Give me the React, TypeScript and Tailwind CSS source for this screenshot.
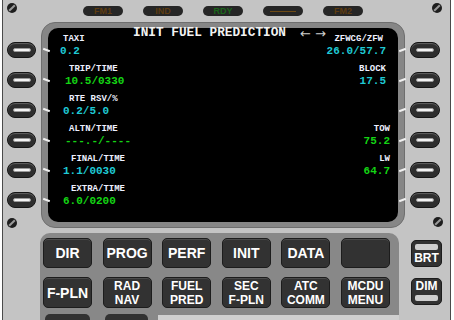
import React from "react";

const mono = { fontFamily: '"Liberation Mono", "DejaVu Sans Mono", monospace' };
const sans = { fontFamily: '"Liberation Sans", Arial, sans-serif' };

function Screw() {
  return (
    <div className="w-[10px] h-[10px] rounded-full bg-[#1e1e1e] flex items-center justify-center">
      <div className="w-[8px] h-[2px] bg-[#9a9a9a] -rotate-45" />
    </div>
  );
}

function Lsk() {
  return (
    <div className="h-[16px] w-full shrink-0 rounded-full bg-[#2e2e2e] border border-[#151515] flex items-center justify-center shadow-[inset_0_1px_1px_rgba(255,255,255,0.25)]">
      <div className="w-[18px] h-[4px] rounded-[2px] bg-[#f4f4f4] border border-[#9a9a9a]" />
    </div>
  );
}

function Annun({ text, color }: { text: string; color: string }) {
  return (
    <div className="w-[40px] h-[10px] rounded-full bg-[#262626] flex items-center justify-center">
      {text ? (
        <span className="text-[9px] leading-none font-bold" style={{ ...sans, color }}>
          {text}
        </span>
      ) : (
        <div className="w-[26px] h-[1px]" style={{ background: color }} />
      )}
    </div>
  );
}

function Key({ lines, h }: { lines: string[]; h: string }) {
  const single = lines.length === 1;
  return (
    <div
      className={`w-[49px] ${h} shrink-0 rounded-[5px] bg-[#323232] border border-[#1c1c1c] flex flex-col items-center justify-center text-white font-bold shadow-[inset_0_1px_0_rgba(255,255,255,0.12)] ${
        single ? "text-[14px] leading-[14px]" : "text-[12px] leading-[14px]"
      }`}
      style={sans}
    >
      {lines.map((l, i) => (
        <span key={i}>{l}</span>
      ))}
    </div>
  );
}

type Row = {
  ll: string;
  lv: string;
  lc: string;
  lpl: string;
  vpl: string;
  rl?: string;
  rv?: string;
  rc?: string;
  rlpr?: string;
  rvpr?: string;
};

const CYAN = "text-[#1fc9d4]";
const GREEN = "text-[#14d414]";

const rows: Row[] = [
  { ll: "TAXI", lv: "0.2", lc: CYAN, lpl: "pl-[15px]", vpl: "pl-[12px]", rl: "ZFWCG/ZFW", rv: "26.0/57.7", rc: CYAN, rlpr: "pr-[15px]", rvpr: "pr-[12px]" },
  { ll: "TRIP/TIME", lv: "10.5/0330", lc: GREEN, lpl: "pl-[21px]", vpl: "pl-[17px]", rl: "BLOCK", rv: "17.5", rc: CYAN, rlpr: "pr-[12px]", rvpr: "pr-[12px]" },
  { ll: "RTE RSV/%", lv: "0.2/5.0", lc: CYAN, lpl: "pl-[21px]", vpl: "pl-[15px]" },
  { ll: "ALTN/TIME", lv: "---.-/----", lc: GREEN, lpl: "pl-[21px]", vpl: "pl-[17px]", rl: "TOW", rv: "75.2", rc: GREEN, rlpr: "pr-[8px]", rvpr: "pr-[8px]" },
  { ll: "FINAL/TIME", lv: "1.1/0030", lc: CYAN, lpl: "pl-[23px]", vpl: "pl-[15px]", rl: "LW", rv: "64.7", rc: GREEN, rlpr: "pr-[8px]", rvpr: "pr-[8px]" },
  { ll: "EXTRA/TIME", lv: "6.0/0200", lc: GREEN, lpl: "pl-[23px]", vpl: "pl-[15px]" },
];

export default function App() {
  const lsks = [0, 1, 2, 3, 4, 5];
  return (
    <div className="w-[454px] h-[320px] bg-white overflow-hidden flex">
      <div className="ml-[2px] w-[449px] h-[320px] shrink-0 bg-[#c4c4c4] border-x border-[#4a4a4a] relative flex flex-col overflow-hidden">
        {/* screws */}
        <div className="absolute left-[4px] top-[3px]"><Screw /></div>
        <div className="absolute left-[429px] top-[3px]"><Screw /></div>
        <div className="absolute left-[4px] top-[218px]"><Screw /></div>
        <div className="absolute left-[430px] top-[217px]"><Screw /></div>

        {/* annunciators */}
        <div className="h-[22px] shrink-0 flex pt-[6px] pl-[80px] gap-[20px]">
          <Annun text="FM1" color="#5e3c10" />
          <Annun text="IND" color="#5e3c10" />
          <Annun text="RDY" color="#1b661b" />
          <Annun text="" color="#6e4a14" />
          <Annun text="FM2" color="#5e3c10" />
        </div>

        {/* middle */}
        <div className="h-[206px] shrink-0 flex">
          <div className="ml-[4px] w-[29px] flex flex-col pt-[20px] gap-[14px]">
            {lsks.map((i) => (
              <Lsk key={i} />
            ))}
          </div>
          <div className="ml-[5px] w-[364px] h-full rounded-[14px] bg-[#868686] border border-[#6e6e6e] pt-[5px] pl-[6px] relative">
            <div className="absolute left-[1px] top-[26px] flex flex-col gap-[28px]">
              {lsks.map((i) => (
                <div key={i} className="w-[7px] h-[2px] bg-[#f0f0f0] rotate-[20deg]" />
              ))}
            </div>
            <div className="absolute left-[357px] top-[26px] flex flex-col gap-[28px]">
              {lsks.map((i) => (
                <div key={i} className="w-[7px] h-[2px] bg-[#f0f0f0] -rotate-[20deg]" />
              ))}
            </div>
            <div className="w-[350px] h-[194px] bg-black rounded-[10px] flex flex-col" style={mono}>
              <div className="h-[11px] shrink-0 -mb-[6px] flex items-center pl-[85px] font-bold text-[12.75px] leading-none text-[#f2f2f2] whitespace-pre">
                <span>INIT FUEL PREDICTION</span>
                <span className="ml-[14px] text-[13px] font-normal text-[#cfcfcf] whitespace-pre" style={{ fontFamily: '"DejaVu Sans", sans-serif' }}>
                  {"← →"}
                </span>
              </div>
              {rows.map((r, i) => (
                <div key={i} className="h-[30px] shrink-0 flex justify-between">
                  <div className="flex flex-col">
                    <div className={`h-[12px] flex items-center ${r.lpl} text-[9px] font-bold leading-none text-[#eef0ff] whitespace-pre`}>
                      {r.ll}
                    </div>
                    <div className={`h-[13px] flex items-center ${r.vpl} text-[11px] font-bold leading-none ${r.lc} whitespace-pre`}>
                      {r.lv}
                    </div>
                  </div>
                  {r.rl ? (
                    <div className="flex flex-col items-end">
                      <div className={`h-[12px] flex items-center ${r.rlpr} text-[9px] font-bold leading-none text-[#eef0ff] whitespace-pre`}>
                        {r.rl}
                      </div>
                      <div className={`h-[13px] flex items-center ${r.rvpr} text-[11px] font-bold leading-none ${r.rc} whitespace-pre`}>
                        {r.rv}
                      </div>
                    </div>
                  ) : null}
                </div>
              ))}
            </div>
          </div>
          <div className="ml-[5px] w-[30px] flex flex-col pt-[20px] gap-[14px]">
            {lsks.map((i) => (
              <Lsk key={i} />
            ))}
          </div>
        </div>

        {/* keypad */}
        <div className="flex shrink-0 mt-[5px]">
          <div className="ml-[37px] w-[359px] h-[100px] shrink-0 rounded-[10px] bg-[#888888] pl-[3px] pt-[5px] flex flex-col gap-[10px]">
            <div className="flex gap-[10.6px] shrink-0">
              <Key lines={["DIR"]} h="h-[30px]" />
              <Key lines={["PROG"]} h="h-[30px]" />
              <Key lines={["PERF"]} h="h-[30px]" />
              <Key lines={["INIT"]} h="h-[30px]" />
              <Key lines={["DATA"]} h="h-[30px]" />
              <Key lines={[""]} h="h-[30px]" />
            </div>
            <div className="flex gap-[10.6px] -mt-[1px] shrink-0">
              <Key lines={["F-PLN"]} h="h-[31px]" />
              <Key lines={["RAD", "NAV"]} h="h-[31px]" />
              <Key lines={["FUEL", "PRED"]} h="h-[31px]" />
              <Key lines={["SEC", "F-PLN"]} h="h-[31px]" />
              <Key lines={["ATC", "COMM"]} h="h-[31px]" />
              <Key lines={["MCDU", "MENU"]} h="h-[31px]" />
            </div>
            <div className="flex -mt-[4px] items-start shrink-0">
              <div className="ml-[2px] w-[45px] h-[20px] rounded-[5px] bg-[#323232]" />
              <div className="ml-[15px] w-[43px] h-[20px] rounded-[5px] bg-[#323232]" />
              <div className="ml-[10px] mt-[1px] flex-1 h-[20px] bg-[#d0d0d0]" />
            </div>
          </div>
          <div className="ml-[12px] pt-[7px] flex flex-col gap-[11px]">
            <div className="w-[31px] h-[27px] rounded-[5px] bg-[#323232] border border-[#1c1c1c] flex flex-col items-center pt-[3px]">
              <div className="w-[23px] h-[6px] rounded-[2px] bg-[#cfcfcf]" />
              <span className="text-white font-bold text-[12px] leading-[14px] mt-[1px]" style={sans}>BRT</span>
            </div>
            <div className="w-[31px] h-[27px] rounded-[5px] bg-[#323232] border border-[#1c1c1c] flex flex-col items-center">
              <span className="text-white font-bold text-[12px] leading-[14px]" style={sans}>DIM</span>
              <div className="w-[23px] h-[6px] rounded-[2px] bg-[#cfcfcf] mt-[2px]" />
            </div>
          </div>
        </div>
      </div>
    </div>
  );
}
